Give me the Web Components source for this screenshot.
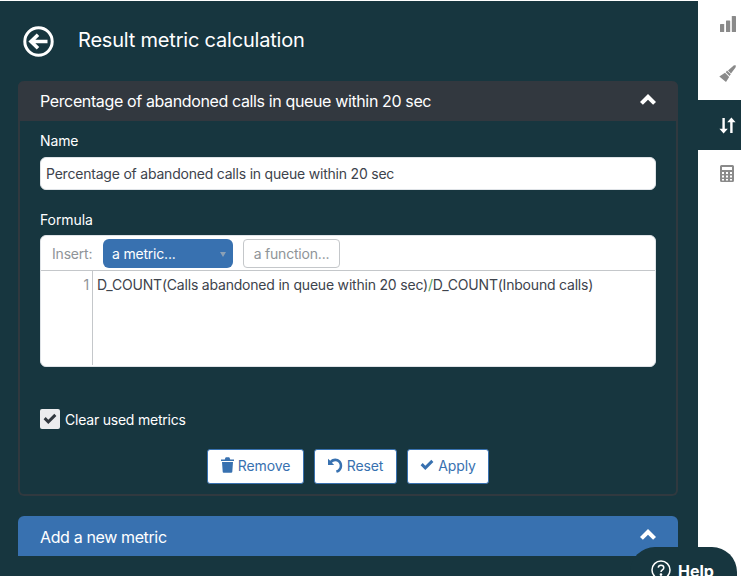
<!DOCTYPE html>
<html>
<head>
<meta charset="utf-8">
<style>
  html, body { margin: 0; height: 100%; overflow: hidden; background: #fff; }
  body { font-family: Inter, "Open Sans", sans-serif; font-size: 14px; color: #fff; }
</style>
</head>
<body>
<calc-page>
  <calc-title slot="title">Result metric calculation</calc-title>
  <calc-panel slot="content" heading="Percentage of abandoned calls in queue within 20 sec">
    <calc-field label="Name">
      <name-input value="Percentage of abandoned calls in queue within 20 sec"></name-input>
    </calc-field>
    <calc-field label="Formula" class="formula">
      <formula-editor></formula-editor>
    </calc-field>
    <clear-check>Clear used metrics</clear-check>
    <action-bar></action-bar>
  </calc-panel>
  <add-panel slot="content">Add a new metric</add-panel>
  <side-tabs slot="side"></side-tabs>
  <help-badge slot="over"></help-badge>
</calc-page>

<script>
const CHEVRON = `<svg viewBox="0 0 16 11" width="16" height="11"><path d="M0 7.900 8 0l8 7.900-2.900 2.900L8 5.800 2.900 10.800z" fill="#fff"/></svg>`

class CalcPage extends HTMLElement {
  constructor() {
    super()
    this.attachShadow({mode: 'open'})
    this.shadowRoot.innerHTML = `
      <style>
        :host { display: flex; width: 742px; height: 576px; position: relative; overflow: hidden; }
        .main { width: 698px; height: 575px; margin-top: 1px; background: #17363f; box-sizing: border-box; padding: 0 20px 0 18px; flex: none; }
        .side { flex: 1; }
      </style>
      <div class="main">
        <slot name="title"></slot>
        <slot name="content"></slot>
      </div>
      <div class="side"><slot name="side"></slot></div>
      <slot name="over"></slot>
    `
  }
}

class CalcTitle extends HTMLElement {
  constructor() {
    super()
    this.attachShadow({mode: 'open'})
    this.shadowRoot.innerHTML = `
      <style>
        :host { display: flex; align-items: center; height: 80px; gap: 24px; padding-left: 5px; font-size: 20px; letter-spacing: -.2px; color: #fff; }
        svg { display: block; }
        span { margin-top: -2px; }
      </style>
      <svg viewBox="0 0 31 31" width="31" height="31" fill="none" stroke="#fff">
        <circle cx="15.500" cy="15.500" r="13.700" stroke-width="3"/>
        <path d="M24.500 15.500H9M15 8.800 8 15.500l7 6.700" stroke-width="3.600"/>
      </svg>
      <span><slot></slot></span>
    `
  }
}

class CalcPanel extends HTMLElement {
  constructor() {
    super()
    this.attachShadow({mode: 'open'})
    this.shadowRoot.innerHTML = `
      <style>
        :host { display: block; height: 415px; box-sizing: border-box; border: 2px solid #30393f; border-top: 0; border-radius: 6px; }
        .head { display: flex; align-items: center; justify-content: space-between; height: 40px; margin: 0 -2px; padding: 0 22px;
          background: #32383f; border-radius: 6px 6px 0 0; font-size: 16px; letter-spacing: -.37px; color: #fff; }
        .head svg { display: block; margin-top: -3px; }
        .body { padding: 0 20px; }
      </style>
      <div class="head"><span class="t"></span>${CHEVRON}</div>
      <div class="body"><slot></slot></div>
    `
    this.shadowRoot.querySelector('.t').textContent = this.getAttribute('heading')
  }
}

class CalcField extends HTMLElement {
  constructor() {
    super()
    this.attachShadow({mode: 'open'})
    this.shadowRoot.innerHTML = `
      <style>
        :host { display: block; padding-top: 11px; }
        :host(.formula) { padding-top: 21px; }
        label { display: block; height: 25px; line-height: 18px; font-size: 14px; letter-spacing: -.1px; color: #fff; }
        :host(.formula) label { height: 24px; line-height: 18px; }
      </style>
      <label></label>
      <slot></slot>
    `
    this.shadowRoot.querySelector('label').textContent = this.getAttribute('label')
  }
}

class NameInput extends HTMLElement {
  constructor() {
    super()
    this.attachShadow({mode: 'open'})
    this.shadowRoot.innerHTML = `
      <style>
        :host { display: block; height: 33px; box-sizing: border-box; background: #fff; border: 1px solid #dfe3e7; border-radius: 6px;
          padding: 0 5px; line-height: 32px; font-size: 14px; letter-spacing: -.21px; color: #3d434c; width: 616px; white-space: nowrap; }
      </style>
      <span></span>
    `
    this.shadowRoot.querySelector('span').textContent = this.getAttribute('value')
  }
}

class FormulaEditor extends HTMLElement {
  constructor() {
    super()
    this.attachShadow({mode: 'open'})
    this.shadowRoot.innerHTML = `
      <style>
        :host { display: block; width: 616px; height: 132px; box-sizing: border-box; background: #fff; border: 1px solid #dfe3e7; border-radius: 6px; font-size: 14px; letter-spacing: -.2px; color: #3d434c; }
        .bar { display: flex; align-items: center; gap: 10px; height: 35px; box-sizing: border-box; border-bottom: 1px solid #c4c7ca; padding: 1px 0 0 11px; }
        .ins { color: #8f9498; margin-right: 0; width: 41px; }
        .sel { display: flex; align-items: center; justify-content: space-between; width: 130px; height: 29px; box-sizing: border-box; padding: 0 7px 0 9px; background: #3871b0; color: #fff; border-radius: 6px; }
        .sel i { width: 0; height: 0; border: 3.500px solid transparent; border-top: 5px solid #8ba0b5; border-bottom: 0; margin-top: 1px; }
        .fn { width: 97px; height: 29px; box-sizing: border-box; border: 1px solid #c4c7ca; border-radius: 4px; color: #8f9498; line-height: 27px; text-align: center; }
        .code { display: flex; height: 94px; }
        .gut { width: 52px; box-sizing: border-box; border-right: 1px solid #c4c7ca; text-align: right; padding: 5px 3px 0 0; color: #8f9498; margin-right: 4px; }
        .txt { padding-top: 5px; white-space: nowrap; }
        .op { color: #4f9d5c; }
      </style>
      <div class="bar">
        <span class="ins">Insert:</span>
        <span class="sel">a metric...<i></i></span>
        <span class="fn">a function...</span>
      </div>
      <div class="code">
        <div class="gut">1</div>
        <div class="txt">D_COUNT(Calls abandoned in queue within 20 sec)<span class="op">/</span>D_COUNT(Inbound calls)</div>
      </div>
    `
  }
}

class ClearCheck extends HTMLElement {
  constructor() {
    super()
    this.attachShadow({mode: 'open'})
    this.shadowRoot.innerHTML = `
      <style>
        :host { display: flex; align-items: center; gap: 5px; height: 20px; margin-top: 42px; font-size: 14px; letter-spacing: -.22px; color: #fff; }
        .box { width: 20px; height: 20px; background: #ececee; border-radius: 2px; display: flex; align-items: center; justify-content: center; }
      </style>
      <span class="box"><svg viewBox="0 0 14 12" width="14" height="12"><path d="M.6 6.200 2.700 4.100 5.300 6.700 11.300.8l2.100 2.100-8.100 8.100z" fill="#32383f"/></svg></span>
      <span><slot></slot></span>
    `
  }
}

class ActionButton extends HTMLElement {
  constructor() {
    super()
    this.attachShadow({mode: 'open'})
    this.shadowRoot.innerHTML = `
      <style>
        :host { display: inline-flex; align-items: center; justify-content: center; gap: 4px; height: 35px; box-sizing: border-box;
          background: #fff; border: 1px solid #3871b0; border-radius: 3px; font-size: 14px; letter-spacing: -.1px; color: #3871b0; }
        ::slotted(svg) { display: block; fill: #3871b0; margin-top: -3px; }
        span { margin-top: -2px; }
      </style>
      <slot name="icon"></slot><span><slot></slot></span>
    `
  }
}

class ActionBar extends HTMLElement {
  constructor() {
    super()
    this.attachShadow({mode: 'open'})
    this.shadowRoot.innerHTML = `
      <style>
        :host { display: flex; justify-content: center; gap: 10px; margin-top: 20px; padding-right: 0; width: 616px; }
      </style>
      <action-button style="width:97px">
        <svg slot="icon" viewBox="0 0 13 16" width="13" height="16"><path d="M0 2.400h3.800L4.400.8c.1-.3.3-.5.600-.5h3c.3 0 .5.2.6.5l.6 1.600H13v1.700H0zM1 5h11l-.7 9.800c0 .5-.4.9-.9.9H2.600c-.5 0-.9-.4-.9-.9z"/></svg>
        Remove
      </action-button>
      <action-button style="width:83px">
        <svg slot="icon" viewBox="0 0 15 15" width="15" height="15"><path d="M0 .8v6.200h6.200L3.900 4.700A4.300 4.300 0 0 1 7.200 3.200c2.600 0 4.500 2 4.500 4.500 0 2.400-1.700 4.300-3.800 4.800l.9 2.300c3.300-.8 5.400-3.600 5.400-7.100C14.200 3.600 11.100.6 7.200.6 5.300.6 3.500 1.400 2.200 2.800z"/></svg>
        Reset
      </action-button>
      <action-button style="width:82px">
        <svg slot="icon" viewBox="0 0 14 12" width="14" height="12"><path d="M.6 6.200 2.700 4.100 5.300 6.700 11.300.8l2.100 2.100-8.100 8.100z"/></svg>
        Apply
      </action-button>
    `
  }
}

class AddPanel extends HTMLElement {
  constructor() {
    super()
    this.attachShadow({mode: 'open'})
    this.shadowRoot.innerHTML = `
      <style>
        :host { display: flex; align-items: center; justify-content: space-between; height: 40px; margin-top: 20px; padding: 0 22px;
          background: #3871b0; border-radius: 6px 6px 0 0; font-size: 16px; letter-spacing: -.37px; color: #fff; }
        svg { display: block; margin-top: -3px; }
        span { margin-top: 2px; }
      </style>
      <span><slot></slot></span>${CHEVRON}
    `
  }
}

class SideTabs extends HTMLElement {
  constructor() {
    super()
    this.attachShadow({mode: 'open'})
    this.shadowRoot.innerHTML = `
      <style>
        :host { display: block; width: 43px; }
        .tab { height: 50px; display: flex; align-items: center; justify-content: flex-end; padding: 0 5px 3px 0; box-sizing: border-box; }
        .on { background: #17363f; padding: 0 5px 0 0; }
        .calc { padding-right: 7px; }
        svg { display: block; fill: #8a8a8a; }
        .on svg { fill: #fff; }
      </style>
      <div class="tab">
        <svg viewBox="0 0 16 16" width="16" height="16"><rect x="0" y="8" width="4.200" height="8" rx=".6"/><rect x="6" y="4.500" width="4.200" height="11.500" rx=".6"/><rect x="11.800" y="0" width="4.200" height="16" rx=".6"/></svg>
      </div>
      <div class="tab">
        <svg viewBox="0 0 17 17" width="17" height="17"><path d="M17 .5 16.500 2.500 12 8.500 9 5.500 15 .3zM8 5.500 11.800 9.300 10.500 11 6.800 7.200zM6 7.800 10.200 12 7 17 .3 11.500z"/></svg>
      </div>
      <div class="tab on">
        <svg viewBox="0 0 17 17" width="17" height="17"><path d="M3.400 1h2.400v10.800h3L4.600 16.500.4 11.800h3zM11.200 16V5.200h-3L12.400.5l4.200 4.700h-3V16z"/></svg>
      </div>
      <div class="tab calc">
        <svg viewBox="0 0 14 17" width="14" height="17"><path fill-rule="evenodd" d="M1.500 0h11A1.500 1.500 0 0 1 14 1.500v14a1.500 1.500 0 0 1-1.500 1.500h-11A1.500 1.500 0 0 1 0 15.500v-14A1.500 1.500 0 0 1 1.500 0zM2 2v3h10V2zM2 7v2h2V7zM6 7v2h2V7zM10 7v2h2V7zM2 10.500v2h2v-2zM6 10.500v2h2v-2zM10 10.500v2h2v-2zM2 14v1.500h2V14zM6 14v1.500h2V14zM10 14v1.500h2V14z"/></svg>
      </div>
    `
  }
}

class HelpBadge extends HTMLElement {
  constructor() {
    super()
    this.attachShadow({mode: 'open'})
    this.shadowRoot.innerHTML = `
      <style>
        :host { position: absolute; left: 630px; top: 547px; width: 107px; height: 50px; box-sizing: border-box; background: #17363f; border-radius: 25px 25px 0 0;
          display: flex; align-items: flex-start; gap: 7px; padding: 13px 0 0 21px; font-size: 16px; font-weight: 700; color: #fff; }
        svg { display: block; flex: none; }
        span { line-height: 20px; margin-top: 1px; }
      </style>
      <svg viewBox="0 0 20 20" width="20" height="20" fill="none" stroke="#fff" stroke-width="1.500">
        <circle cx="10" cy="10" r="9"/>
        <path d="M7.200 7.600c.2-1.500 1.300-2.300 2.800-2.300 1.600 0 2.800 1 2.800 2.400 0 2.300-2.800 2.100-2.800 4.400" />
        <circle cx="10" cy="14.600" r=".6" fill="#fff"/>
      </svg>
      <span>Help</span>
    `
  }
}

customElements.define('calc-page', CalcPage)
customElements.define('calc-title', CalcTitle)
customElements.define('calc-panel', CalcPanel)
customElements.define('calc-field', CalcField)
customElements.define('name-input', NameInput)
customElements.define('formula-editor', FormulaEditor)
customElements.define('clear-check', ClearCheck)
customElements.define('action-button', ActionButton)
customElements.define('action-bar', ActionBar)
customElements.define('add-panel', AddPanel)
customElements.define('side-tabs', SideTabs)
customElements.define('help-badge', HelpBadge)
</script>
</body>
</html>
